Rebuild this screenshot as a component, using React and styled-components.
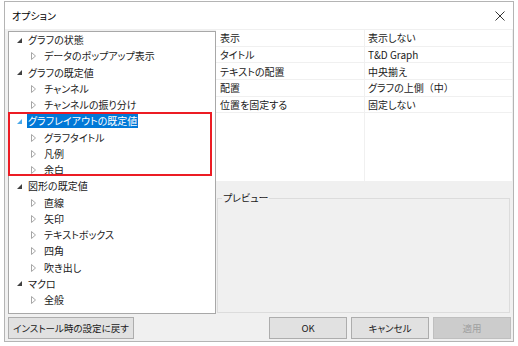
import React from "react"
import styled, { createGlobalStyle } from "styled-components"

const GlobalStyle = createGlobalStyle`
  body {
    margin: 0;
    background: #ffffff;
    font-family: "Noto Sans CJK JP", "Noto Sans", sans-serif;
    font-feature-settings: "palt";
    color: #000;
  }
`

const Page = styled.div`
  padding: 1px 0 0 4px;
`

const Window = styled.div`
  width: 510px;
  height: 341px;
  box-sizing: border-box;
  border: 1px solid #b4b4b4;
  display: flex;
  flex-direction: column;
  background: #f0f0f0;
`

const TitleBar = styled.div`
  height: 27px;
  flex: none;
  background: #ffffff;
  display: flex;
  align-items: center;
  justify-content: space-between;
  padding: 0 8px 0 7px;
  font-size: 10px;
`

const Body = styled.div`
  display: grid;
  grid-template-columns: 208px 296px;
  grid-template-rows: 283px 22px;
  row-gap: 3px;
  padding: 2px 0 2px 3px;
`

const Tree = styled.div`
  position: relative;
  background: #ffffff;
  border: 1px solid #a8a8a8;
  box-sizing: border-box;
  font-size: 10px;
`

const Row = styled.div`
  height: 16.25px;
  display: flex;
  align-items: center;
  padding-left: ${props => (props.child ? "22px" : "8px")};
  white-space: nowrap;
`

const Toggle = styled.span`
  width: ${props => (props.child ? "12px" : "10px")};
  flex: none;
  display: flex;
  align-items: center;
`

const Label = styled.span`
  line-height: 14px;
  padding: 0 1px;
  background: ${props => (props.selected ? "#0078d7" : "transparent")};
  color: ${props => (props.selected ? "#ffffff" : "#1a1a1a")};
`

const Highlight = styled.div`
  position: absolute;
  left: -1px;
  top: 80px;
  width: 204px;
  height: 64px;
  box-sizing: border-box;
  border: 2px solid #ec1c24;
  pointer-events: none;
`

const Right = styled.div`
  display: flex;
  flex-direction: column;
`

const Grid = styled.div`
  height: 151px;
  flex: none;
  display: grid;
  grid-template-columns: 148px 1fr;
  grid-auto-rows: 16.65px;
  font-size: 10px;
  margin-top: -1px;
  background-color: #ffffff;
  background-image: linear-gradient(#f0f0f0, #f0f0f0);
  background-size: 1px 100%;
  background-position: 148px 0;
  background-repeat: no-repeat;
`

const Cell = styled.div`
  display: flex;
  align-items: center;
  padding-left: 4px;
  border-bottom: 1px solid #f0f0f0;
  white-space: nowrap;
  color: #1a1a1a;
`

const FullWidth = styled.span`
  font-feature-settings: normal;
`

const PreviewArea = styled.div`
  flex: 1;
  padding: 10px 2px 1px 1px;
  display: flex;
`

const Group = styled.fieldset`
  flex: 1;
  margin: 0;
  border: 1px solid #dcdcdc;
  padding: 0 0 0 4px;
  min-width: 0;
`

const Legend = styled.legend`
  padding: 0 1px;
  font-size: 10px;
  line-height: 14px;
  color: #1a1a1a;
`

const Buttons = styled.div`
  grid-column: 1 / -1;
  display: flex;
  gap: 4px;
  padding-right: 1px;
`

const Button = styled.div`
  width: ${props => (props.wide ? "126px" : "78px")};
  height: 22px;
  box-sizing: border-box;
  display: flex;
  align-items: center;
  justify-content: center;
  font-size: 9.5px;
  background: ${props => (props.disabled ? "#cccccc" : "#e1e1e1")};
  border: 1px solid ${props => (props.disabled ? "#bfbfbf" : "#adadad")};
  color: ${props => (props.disabled ? "#a0a0a0" : "#1a1a1a")};
  margin-right: ${props => (props.wide ? "auto" : "0")};
`

const ExpandedIcon = ({ color }) => (
  <svg width="5" height="5" viewBox="0 0 5 5">
    <polygon points="5,0 5,5 0,5" fill={color} />
  </svg>
)

const CollapsedIcon = () => (
  <svg width="5" height="8" viewBox="0 0 5 8">
    <polygon points="0.5,0.5 4.5,4 0.5,7.5" fill="none" stroke="#a6a6a6" strokeWidth="1" />
  </svg>
)

const CloseIcon = () => (
  <svg width="10" height="10" viewBox="0 0 10 10">
    <path d="M0.5 0.5 L9.5 9.5 M9.5 0.5 L0.5 9.5" stroke="#333" strokeWidth="1" />
  </svg>
)

const tree = [
  { label: "グラフの状態", children: ["データのポップアップ表示"] },
  { label: "グラフの既定値", children: ["チャンネル", "チャンネルの振り分け"] },
  { label: "グラフレイアウトの既定値", selected: true, children: ["グラフタイトル", "凡例", "余白"] },
  { label: "図形の既定値", children: ["直線", "矢印", "テキストボックス", "四角", "吹き出し"] },
  { label: "マクロ", children: ["全般"] },
]

const props = [
  ["表示", "表示しない"],
  ["タイトル", "T&D Graph"],
  ["テキストの配置", "中央揃え"],
  ["配置", <>グラフの上側<FullWidth>（中）</FullWidth></>],
  ["位置を固定する", "固定しない"],
]

export default function App() {
  return (
    <Page>
      <GlobalStyle />
      <Window>
        <TitleBar>
          <span>オプション</span>
          <CloseIcon />
        </TitleBar>
        <Body>
          <Tree>
            {tree.map(node => (
              <React.Fragment key={node.label}>
                <Row>
                  <Toggle>
                    <ExpandedIcon color={node.selected ? "#4aa8e8" : "#404040"} />
                  </Toggle>
                  <Label selected={node.selected}>{node.label}</Label>
                </Row>
                {node.children.map(c => (
                  <Row child key={c}>
                    <Toggle child>
                      <CollapsedIcon />
                    </Toggle>
                    <Label>{c}</Label>
                  </Row>
                ))}
              </React.Fragment>
            ))}
            <Highlight />
          </Tree>
          <Right>
            <Grid>
              {props.map(([k, v]) => (
                <React.Fragment key={k}>
                  <Cell>{k}</Cell>
                  <Cell>{v}</Cell>
                </React.Fragment>
              ))}
            </Grid>
            <PreviewArea>
              <Group>
                <Legend>プレビュー</Legend>
              </Group>
            </PreviewArea>
          </Right>
          <Buttons>
            <Button wide>インストール時の設定に戻す</Button>
            <Button>OK</Button>
            <Button>キャンセル</Button>
            <Button disabled>適用</Button>
          </Buttons>
        </Body>
      </Window>
    </Page>
  )
}
